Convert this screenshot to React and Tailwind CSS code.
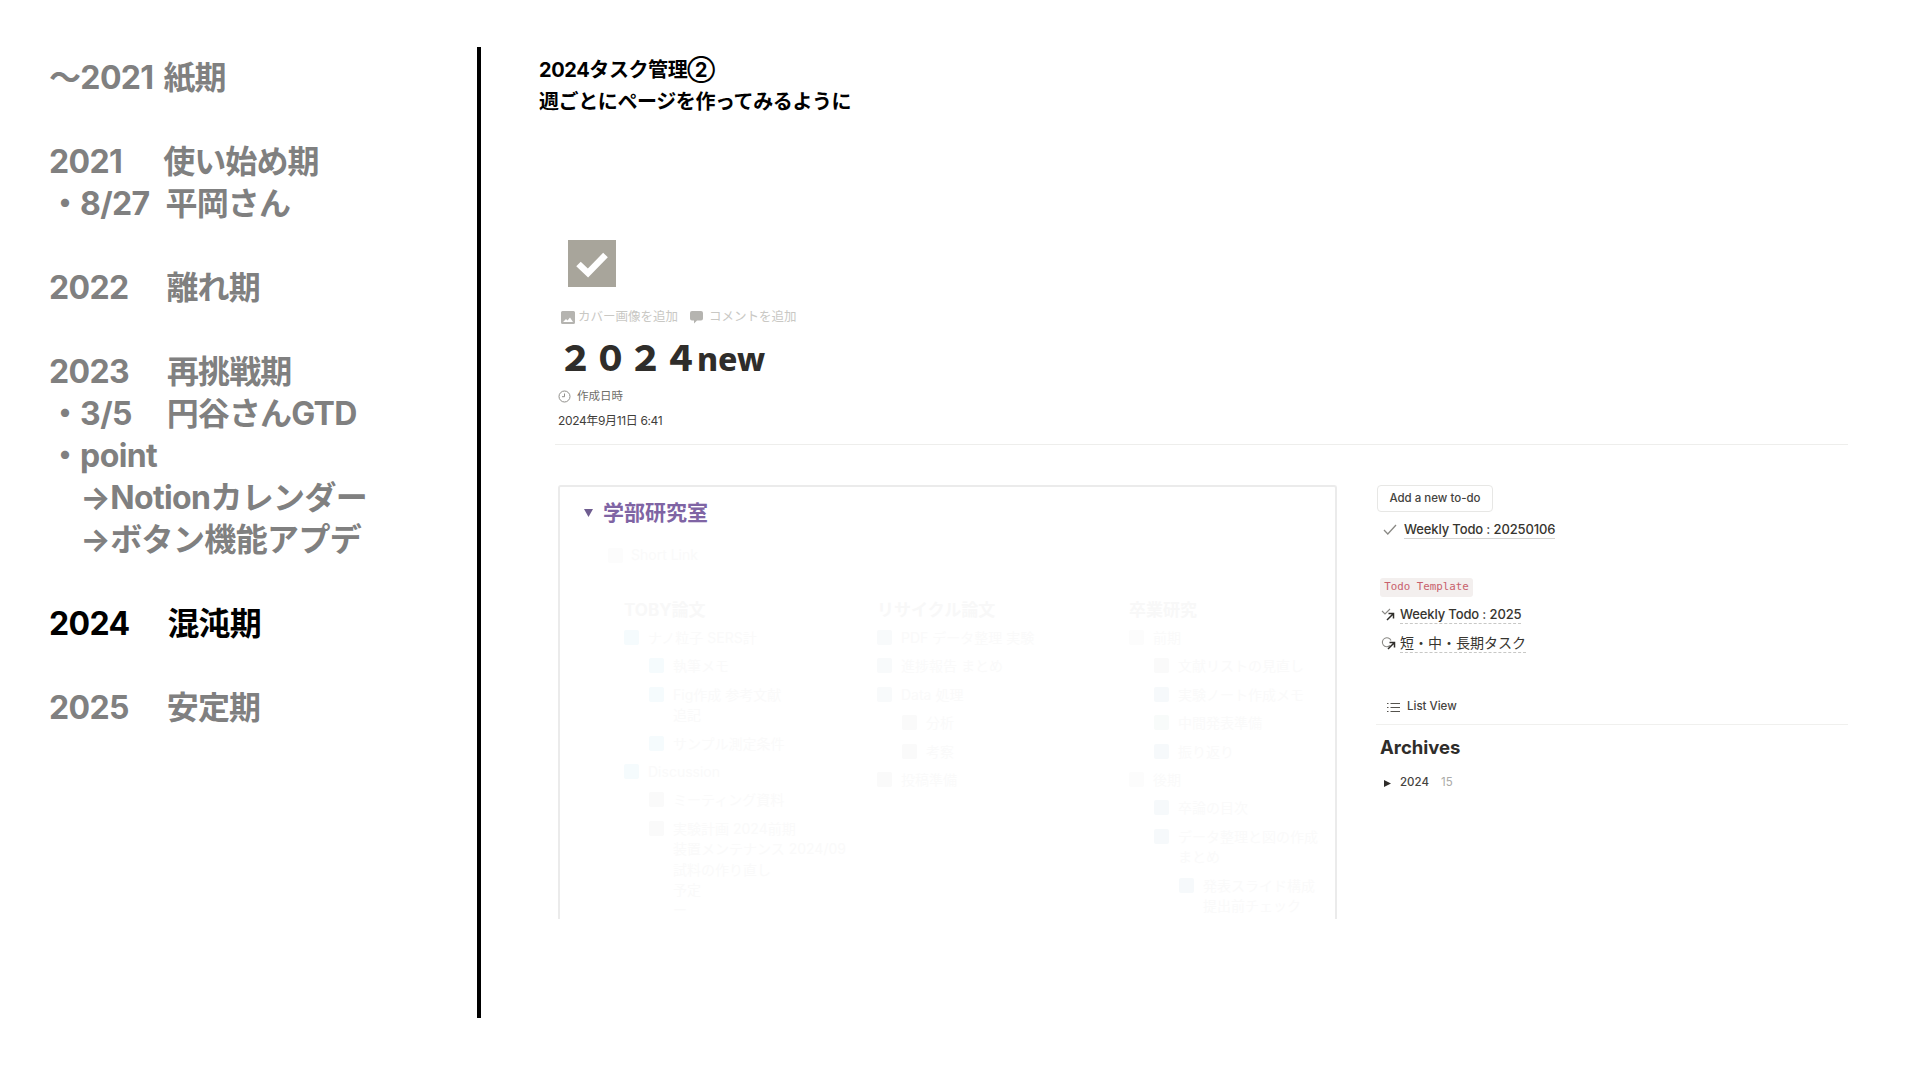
import React from "react";

const SANS = "font-['Inter','Noto_Sans_CJK_JP',sans-serif]";

const L = ({ children }) => <span className="tracking-[-0.02em]">{children}</span>;
const Gap = () => <span className="inline-block w-[38px]" />;

const columns = [
  {
    title: "TOBY論文",
    className: "w-[317px] pl-[64px]",
    rows: [
      { text: "ナノ粒子 SERS計", tint: "bg-[#f5fbfd]" },
      { text: "執筆メモ", level: 1, tint: "bg-[#f5fbfd]" },
      { text: "Fig作成 参考文献", level: 1, tint: "bg-[#f5fbfd]", wraps: ["追記"] },
      { text: "サンプル測定条件", level: 1, tint: "bg-[#f5fbfd]" },
      { text: "Discussion", tint: "bg-[#f5fbfd]" },
      { text: "ミーティング資料", level: 1, tint: "bg-[#fafafa]" },
      { text: "実験計画 2024前期", level: 1, tint: "bg-[#fafafa]", wraps: ["装置メンテナンス 2024/09", "試料の作り直し", "予定", "ー"] },
    ],
  },
  {
    title: "リサイクル論文",
    className: "w-[252px]",
    rows: [
      { text: "PDF データ整理 実験", tint: "bg-[#f8fafb]" },
      { text: "進捗報告 まとめ", tint: "bg-[#f8fafb]" },
      { text: "Data 処理", tint: "bg-[#f8fafb]" },
      { text: "分析", level: 1, tint: "bg-[#fafafa]" },
      { text: "考察", level: 1, tint: "bg-[#fafafa]" },
      { text: "投稿準備", tint: "bg-[#fafafa]" },
    ],
  },
  {
    title: "卒業研究",
    className: "flex-1",
    rows: [
      { text: "前期", tint: "bg-[#fcfcfc]" },
      { text: "文献リストの見直し", level: 1, tint: "bg-[#fafafa]" },
      { text: "実験ノート作成メモ", level: 1, tint: "bg-[#f6f9fb]" },
      { text: "中間発表準備", level: 1, tint: "bg-[#f8fbfa]" },
      { text: "振り返り", level: 1, tint: "bg-[#f6f9fb]" },
      { text: "後期", tint: "bg-[#fcfcfc]" },
      { text: "卒論の目次", level: 1, tint: "bg-[#f6f9fb]" },
      { text: "データ整理と図の作成", level: 1, tint: "bg-[#f6f9fb]", wraps: ["まとめ"] },
      { text: "発表スライド構成", level: 2, tint: "bg-[#f6f9fb]", wraps: ["提出前チェック"] },
    ],
  },
];

const levelPad = ["pl-0", "pl-[25px]", "pl-[50px]"];

const FaintRow = ({ row }) => (
  <div className={`${levelPad[row.level || 0]} flex gap-[9px]`}>
    <div className={`w-[15px] h-[15px] mt-[6px] shrink-0 rounded-[2px] ${row.tint}`} />
    <div className="text-[14px] leading-[28.4px] text-[#fafafa]">
      <div>{row.text}</div>
      {(row.wraps || []).map((w) => (
        <div key={w} className="-mt-[8px]">{w}</div>
      ))}
    </div>
  </div>
);

const App = () => {
  return (
    <div className={`w-[1920px] h-[1080px] bg-white flex overflow-hidden ${SANS}`}>
      {/* left timeline */}
      <div className="w-[477px] pl-[49px] pt-[57px] text-[32px] leading-[42px] font-bold tracking-[-0.028em] text-[#808080]">
        <div className="mb-[42px] whitespace-pre"><L>〜2021</L><span className="inline-block w-[10px]" />紙期</div>
        <div className="mb-[42px] whitespace-pre">
          <div><L>2021</L><span className="inline-block w-[41px]" />使い始め期</div>
          <div>・<L>8/27</L><span className="inline-block w-[16px]" />平岡さん</div>
        </div>
        <div className="mb-[42px] whitespace-pre"><L>2022</L><Gap />離れ期</div>
        <div className="mb-[42px] whitespace-pre">
          <div><L>2023</L><Gap />再挑戦期</div>
          <div>・<L>3/5</L><Gap /><span className="ml-[-3px]">円谷さん</span><L>GTD</L></div>
          <div>・<L>point</L></div>
          <div className="tracking-[-0.02em]">　→<L>Notion</L>カレンダー</div>
          <div className="tracking-[-0.02em]">　→ボタン機能アプデ</div>
        </div>
        <div className="mb-[42px] whitespace-pre text-black"><L>2024</L><Gap />混沌期</div>
        <div className="mb-[42px] whitespace-pre"><L>2025</L><Gap />安定期</div>
      </div>

      {/* divider */}
      <div className="w-[4px] h-[971px] mt-[47px] bg-black shrink-0" />

      {/* right side */}
      <div className="flex-1 pl-[58px] pr-[72px]">
        <div className="pt-[54px] text-[20px] leading-[32px] font-bold text-black tracking-[-0.02em]">
          <div>2024タスク管理②</div>
          <div>週ごとにページを作ってみるように</div>
        </div>

        {/* notion page */}
        <div className="mt-[122px] pl-[19px]">
          <div className="ml-[10px] w-[48px] h-[47px] bg-[#a8a59b] flex items-center justify-center">
            <svg width="34" height="28" viewBox="0 0 34 28" fill="none">
              <path d="M3.500 14 13 23 30.500 5" stroke="white" strokeWidth="6.500" />
            </svg>
          </div>

          <div className="mt-[23px] ml-[3px] flex items-center gap-[12px] text-[12.5px] leading-[14px] text-[#c9c8c4]">
            <div className="flex items-center gap-[3px]">
              <svg width="14" height="13" viewBox="0 0 14 13" fill="#b5b4b0">
                <path d="M1.500 0h11A1.500 1.500 0 0 1 14 1.500v10a1.500 1.500 0 0 1-1.500 1.500h-11A1.500 1.500 0 0 1 0 11.500v-10A1.500 1.500 0 0 1 1.500 0Zm.5 11h10L9 6.500 6.500 9.500 5 8Z" fillRule="evenodd" />
              </svg>
              カバー画像を追加
            </div>
            <div className="flex items-center gap-[6px]">
              <svg width="13" height="13" viewBox="0 0 13 13" fill="#b5b4b0">
                <path d="M2 0h9a2 2 0 0 1 2 2v5.500a2 2 0 0 1-2 2H7L4 12.500V9.500H2a2 2 0 0 1-2-2V2a2 2 0 0 1 2-2Z" />
              </svg>
              コメントを追加
            </div>
          </div>

          <div className="mt-[9px] flex items-baseline text-[#2f2d2a]">
            <span className="text-[35px] leading-[46px] font-black font-['Noto_Sans_CJK_JP',sans-serif]">２０２４</span>
            <span className="ml-[-1px] text-[32px] leading-[46px] font-extrabold font-['Noto_Sans',sans-serif]">new</span>
          </div>

          <div className="mt-[6px] flex items-center gap-[6px] text-[11.5px] leading-[16px] text-[#6f6e69]">
            <svg width="13" height="13" viewBox="0 0 13 13" fill="none" stroke="#8f8e8a" strokeWidth="1">
              <circle cx="6.500" cy="6.500" r="5.500" />
              <path d="M6.500 3.500v3.200H4" />
            </svg>
            作成日時
          </div>
          <div className="mt-[9px] text-[12px] leading-[16px] text-[#3f3e3b] tracking-[-0.03em]">2024年9月11日 6:41</div>
          <div className="mt-[15px] -ml-[3px] h-px bg-[#eeeeec]" />

          <div className="mt-[40px] flex items-start">
            {/* faded panel */}
            <div className="w-[779px] h-[434px] border-x-2 border-t-2 border-[#ebebeb] rounded-t-[3px] shrink-0">
              <div className="pl-[24px] pt-[11px] flex items-center gap-[10px] text-[21px] leading-[30px] font-bold text-[#7f64a4]">
                <svg width="9" height="8" viewBox="0 0 9 8" fill="#6f5d90"><path d="M0 0h9L4.500 8Z" /></svg>
                学部研究室
              </div>
              <div className="mt-[17px] pl-[48px] flex items-center gap-[8px] text-[14px] leading-[20px] text-[#fafafa]">
                <div className="w-[15px] h-[15px] rounded-[2px] bg-[#fcfcfc]" />
                Short Link
              </div>
              <div className="mt-[31px] flex">
                {columns.map((col) => (
                  <div key={col.title} className={col.className}>
                    <div className="text-[17px] leading-[28px] font-bold text-[#f8f8f8]">{col.title}</div>
                    {col.rows.map((row) => (
                      <FaintRow key={row.text} row={row} />
                    ))}
                  </div>
                ))}
              </div>
            </div>

            {/* right links */}
            <div className="ml-[40px] flex-1 text-[#37352f]">
              <div className="w-[116px] h-[27px] border border-[#e7e7e5] rounded-[4px] flex items-center justify-center text-[11.5px] font-medium text-[#45433e]">
                Add a new to-do
              </div>

              <div className="mt-[7px] ml-[6px] flex items-center gap-[7px] h-[20px]">
                <svg width="14" height="11" viewBox="0 0 14 11" fill="none" stroke="#8a8985" strokeWidth="1.300"><path d="M1 6l3.800 4L13 1" /></svg>
                <span className="text-[13px] leading-[18px] font-medium border-b border-[#d5d5d3] tracking-[-0.01em]">Weekly Todo : 20250106</span>
              </div>

              <div className="mt-[39px] ml-[3px] w-[93px] h-[19px] bg-[#f3efee] rounded-[3px] flex items-center justify-center font-['DejaVu_Sans_Mono',monospace] text-[10.8px] text-[#c8616c]">
                Todo Template
              </div>

              <div className="mt-[7px] ml-[4px] flex items-center gap-[4px] h-[20px]">
                <svg width="15" height="13" viewBox="0 0 15 13" fill="none" stroke="#8a8985" strokeWidth="1.100">
                  <path d="M1 3l3 3 5-5" />
                  <path d="M6 12l6-6M7.500 5.500H12.500V10.500" stroke="#2f2d2a" strokeWidth="1.500" />
                </svg>
                <span className="text-[13px] leading-[18px] font-medium border-b border-dashed border-[#c8c8c6] tracking-[-0.01em]">Weekly Todo : 2025</span>
              </div>

              <div className="mt-[8px] ml-[4px] flex items-center gap-[4px] h-[21px]">
                <svg width="15" height="14" viewBox="0 0 15 14" fill="none" stroke="#8a8985" strokeWidth="1.100">
                  <path d="M9 9.500A4.500 4.500 0 1 1 10 4.500" />
                  <path d="M7 13l6-6M8.500 6.500H13.500V11.500" stroke="#2f2d2a" strokeWidth="1.500" />
                </svg>
                <span className="text-[14px] leading-[19px] border-b border-dashed border-[#c8c8c6]">短・中・長期タスク</span>
              </div>

              <div className="mt-[44px] ml-[10px] flex items-center gap-[7px] h-[20px] text-[11.500px] font-medium text-[#45433e]">
                <svg width="13" height="11" viewBox="0 0 13 11" fill="none" stroke="#55534e" strokeWidth="1">
                  <path d="M0 1.500h1.500M0 5.500h1.500M0 9.500h1.500M3.500 1.500H13M3.500 5.500H13M3.500 9.500H13" />
                </svg>
                List View
              </div>
              <div className="mt-[7px] -ml-px h-px bg-[#f0f0ee]" />

              <div className="mt-[9px] ml-[3px] text-[18.500px] leading-[26px] font-bold text-[#2f2d2a]">Archives</div>
              <div className="mt-[14px] ml-[7px] flex items-center h-[18px] text-[11.500px] font-medium text-[#45433e]">
                <svg width="7" height="7" viewBox="0 0 7 7" fill="#2f2d2a"><path d="M0 0l7 3.500L0 7Z" /></svg>
                <span className="ml-[9px]">2024</span>
                <span className="ml-[12px] font-normal text-[#aaaaa8]">15</span>
              </div>
            </div>
          </div>
        </div>
      </div>
    </div>
  );
};

export default App;
